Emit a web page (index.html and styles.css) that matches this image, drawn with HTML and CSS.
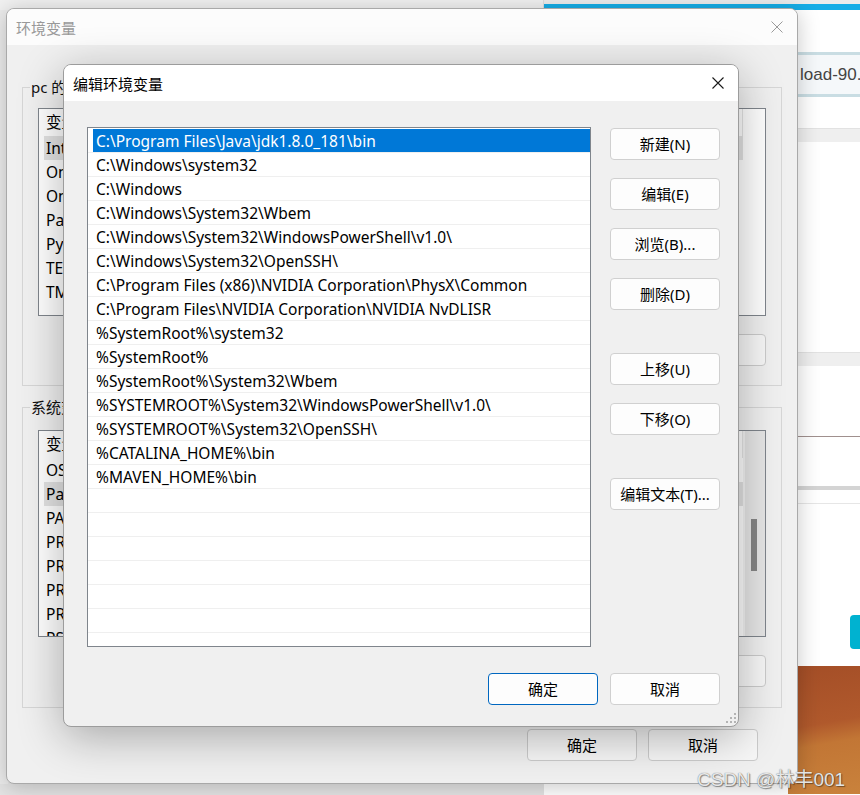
FILE: index.html
```html
<!DOCTYPE html>
<html lang="zh-CN">
<head>
    <meta charset="UTF-8">
    <title>编辑环境变量</title>
    <link rel="stylesheet" href="styles.css">
</head>
<body>
    <div class="desk-top"></div>
    <div class="desk-left"></div>

    <!-- 背后的网页 -->
    <div class="site">
        <div class="site-top"></div>
        <div class="site-bar"></div>
        <div class="site-input">load-90.</div>
        <div class="site-strip s1"></div>
        <div class="site-strip s2"></div>
        <div class="site-line l1"></div>
        <div class="site-strip s3"></div>
        <div class="site-line l2"></div>
        <div class="site-btn"></div>
        <div class="site-wall"></div>
    </div>

    <!-- 环境变量 窗口 -->
    <div class="win win-back">
        <div class="win-title">
            <span>环境变量</span>
            <svg class="close" width="12" height="12" viewBox="0 0 12 12"><path d="M0.5 0.5L11.5 11.5M11.5 0.5L0.5 11.5" stroke="#9a9a9a" stroke-width="1"/></svg>
        </div>
        <div class="back-body">
            <fieldset class="group g-user">
                <legend>pc 的用户变量(U)</legend>
                <div class="vlist vl-user">
                    <div class="vlist-main">
                        <div class="vhead">变量</div>
                        <div class="vrow hl">IntelliJ IDEA</div>
                        <div class="vrow">OneDrive</div>
                        <div class="vrow">OneDriveConsumer</div>
                        <div class="vrow">Path</div>
                        <div class="vrow">PyCharm Community Edition</div>
                        <div class="vrow">TEMP</div>
                        <div class="vrow">TMP</div>
                    </div>
                </div>
                <div class="group-btns">
                    <div class="btn btn-back">新建(N)...</div>
                    <div class="btn btn-back">编辑(E)...</div>
                    <div class="btn btn-back">删除(D)</div>
                </div>
            </fieldset>
            <fieldset class="group g-sys">
                <legend>系统变量(S)</legend>
                <div class="vlist vl-sys">
                    <div class="vlist-main">
                        <div class="vhead">变量</div>
                        <div class="vrow">OS</div>
                        <div class="vrow hl">Path</div>
                        <div class="vrow">PATHEXT</div>
                        <div class="vrow">PROCESSOR_ARCHITECTURE</div>
                        <div class="vrow">PROCESSOR_IDENTIFIER</div>
                        <div class="vrow">PROCESSOR_LEVEL</div>
                        <div class="vrow">PROCESSOR_REVISION</div>
                        <div class="vrow">PSModulePath</div>
                    </div>
                    <div class="vscroll"><div class="thumb"></div></div>
                </div>
                <div class="group-btns sys-btns">
                    <div class="btn btn-back">新建(W)...</div>
                    <div class="btn btn-back">编辑(I)...</div>
                    <div class="btn btn-back">删除(L)</div>
                </div>
            </fieldset>
            <div class="back-foot">
                <div class="btn btn-back">确定</div>
                <div class="btn btn-back">取消</div>
            </div>
        </div>
    </div>

    <!-- 编辑环境变量 对话框 -->
    <div class="win win-edit">
        <div class="win-title edit-title">
            <span>编辑环境变量</span>
            <svg class="close" width="12" height="12" viewBox="0 0 12 12"><path d="M0.5 0.5L11.5 11.5M11.5 0.5L0.5 11.5" stroke="#1a1a1a" stroke-width="1.1"/></svg>
        </div>
        <div class="edit-body">
            <div class="edit-main">
                <ul class="paths">
                    <li class="sel"><span>C:\Program Files\Java\jdk1.8.0_181\bin</span></li>
                    <li><span>C:\Windows\system32</span></li>
                    <li><span>C:\Windows</span></li>
                    <li><span>C:\Windows\System32\Wbem</span></li>
                    <li><span>C:\Windows\System32\WindowsPowerShell\v1.0\</span></li>
                    <li><span>C:\Windows\System32\OpenSSH\</span></li>
                    <li><span>C:\Program Files (x86)\NVIDIA Corporation\PhysX\Common</span></li>
                    <li><span>C:\Program Files\NVIDIA Corporation\NVIDIA NvDLISR</span></li>
                    <li><span>%SystemRoot%\system32</span></li>
                    <li><span>%SystemRoot%</span></li>
                    <li><span>%SystemRoot%\System32\Wbem</span></li>
                    <li><span>%SYSTEMROOT%\System32\WindowsPowerShell\v1.0\</span></li>
                    <li><span>%SYSTEMROOT%\System32\OpenSSH\</span></li>
                    <li><span>%CATALINA_HOME%\bin</span></li>
                    <li><span>%MAVEN_HOME%\bin</span></li>
                    <li><span></span></li>
                    <li><span></span></li>
                    <li><span></span></li>
                    <li><span></span></li>
                    <li><span></span></li>
                    <li><span></span></li>
                </ul>
                <div class="side">
                    <div class="btn">新建(N)</div>
                    <div class="btn">编辑(E)</div>
                    <div class="btn">浏览(B)...</div>
                    <div class="btn">删除(D)</div>
                    <div class="btn gap-lg">上移(U)</div>
                    <div class="btn">下移(O)</div>
                    <div class="btn gap-lg">编辑文本(T)...</div>
                </div>
            </div>
            <div class="edit-foot">
                <div class="btn btn-ok">确定</div>
                <div class="btn">取消</div>
            </div>
        </div>
        <svg class="grip" width="13" height="13" viewBox="0 0 13 13">
            <rect x="9" y="1" width="2" height="2" fill="#b4b4b4"/>
            <rect x="5" y="5" width="2" height="2" fill="#b4b4b4"/>
            <rect x="9" y="5" width="2" height="2" fill="#b4b4b4"/>
            <rect x="1" y="9" width="2" height="2" fill="#b4b4b4"/>
            <rect x="5" y="9" width="2" height="2" fill="#b4b4b4"/>
            <rect x="9" y="9" width="2" height="2" fill="#b4b4b4"/>
        </svg>
    </div>

    <div class="mark">CSDN @林丰001</div>
</body>
</html>
```

FILE: styles.css
```css
* {
    box-sizing: border-box;
}

body, html {
    margin: 0;
    padding: 0;
}
body {
    position: relative;
    width: 860px;
    height: 795px;
    overflow: hidden;
    background: #e4e4e4;
    font-family: "Noto Sans", "Noto Sans CJK SC", sans-serif;
    font-size: 15px;
    color: #000;
}

/* 桌面上其它窗口的边 */
.desk-top {
    position: absolute;
    left: 0;
    top: 0;
    width: 544px;
    height: 10px;
    background: #f1f1f1;
    border-right: 1px solid #ddd;
}
.desk-left {
    position: absolute;
    left: 0;
    top: 10px;
    width: 8px;
    height: 774px;
    background: #ececec;
}

/* 右边的网页 */
.site {
    position: absolute;
    left: 544px;
    top: 0;
    width: 316px;
    height: 795px;
    background: #fff;
}
.site-top {
    height: 4px;
    background: #ececec;
}
.site-bar {
    height: 6px;
    background: #16ade6;
}
.site-input {
    margin: 42px 0 0 230px;
    height: 45px;
    border: 3px solid #c9dde3;
    border-right: none;
    background: #f5f8fa;
    padding-left: 23px;
    line-height: 39px;
    font-size: 17px;
    color: #444;
    font-family: "Liberation Sans", sans-serif;
    white-space: nowrap;
}
.site-strip {
    height: 14px;
    background: #efefef;
    border-top: 1px solid #e2e2e2;
}
.s1 { margin-top: 31px; }
.s2 { margin-top: 210px; }
.s3 {
    margin-top: 49px;
    height: 4px;
    background: #d4d4d4;
    border: none;
}
.site-line {
    height: 1px;
}
.l1 {
    margin-top: 70px;
    background: #a0908e;
}
.l2 {
    margin-top: 13px;
    background: #e6e6e6;
}
.site-btn {
    margin: 111px 0 0 306px;
    height: 34px;
    border-radius: 4px 0 0 4px;
    background: #00b2d0;
}
.site-wall {
    margin: 17px 0 0 244px;
    height: 128px;
    background: linear-gradient(170deg, #a44e27 0%, #b0592c 45%, #c27635 60%, #c9823c 100%);
}

/* 窗口 */
.win {
    position: absolute;
    border: 1px solid #a9a9a9;
    border-radius: 8px;
    overflow: hidden;
    background: #f0f0f0;
}
.win-title {
    height: 36px;
    display: flex;
    align-items: center;
    justify-content: space-between;
    padding: 0 14px 0 9px;
    background: #fcfcfc;
}
.close {
    display: block;
}

.win-back {
    left: 6px;
    top: 8px;
    width: 792px;
    height: 776px;
    box-shadow: 0 3px 22px rgba(0, 0, 0, 0.22);
}
.win-back .win-title {
    color: #999;
}
.back-body {
    padding: 0 15px;
}
.group {
    margin: 0;
    padding: 0 15px 19px;
    border: 1px solid #d6d6d6;
    min-width: 0;
}
.group legend {
    margin-left: -8px;
    padding: 0 1px;
    line-height: 20px;
    color: #111;
}
.g-user {
    margin-top: 32px;
}
.g-sys {
    margin-top: 11px;
    padding-bottom: 20px;
}
.vlist {
    display: flex;
    background: #fff;
    border: 1px solid #7f858c;
    overflow: hidden;
    font-size: 15.5px;
}
.vl-user {
    margin-top: 11px;
    height: 208px;
}
.vl-sys {
    margin-top: 13px;
    height: 207px;
}
.vlist-main {
    flex-grow: 1;
    min-width: 0;
}
.vhead {
    height: 27px;
    line-height: 27px;
    padding-left: 7px;
    border-right: 1px solid #e5e5e5;
    margin-right: 22px;
}
.vrow {
    height: 24px;
    line-height: 24px;
    margin: 0 22px 0 5px;
    padding-left: 2px;
    white-space: nowrap;
    overflow: hidden;
}
.vrow.hl {
    background: #e3e3e3;
}
.vl-sys .vrow {
    margin-right: 0;
}
.vl-sys .vhead {
    margin-right: 0;
}
.vscroll {
    width: 22px;
    background: linear-gradient(90deg, #f4f4f4 0, #f4f4f4 2px, #e6e6e6 2px);
}
.thumb {
    width: 6px;
    height: 52px;
    margin: 88px 0 0 8px;
    background: #858585;
}
.group-btns {
    display: flex;
    justify-content: flex-end;
    gap: 11px;
    margin-top: 18px;
}
.back-foot {
    display: flex;
    justify-content: flex-end;
    gap: 11px;
    margin: 21px 24px 0 0;
}

/* 按钮 */
.btn {
    width: 110px;
    height: 32px;
    line-height: 30px;
    text-align: center;
    background: #fdfdfd;
    border: 1px solid #d0d0d0;
    border-radius: 4px;
    white-space: nowrap;
}
.btn-back {
    background: #f7f7f7;
    border-color: #cbcbcb;
}
.btn-ok {
    border-color: #0067c0;
}

/* 编辑环境变量 */
.win-edit {
    left: 63px;
    top: 64px;
    width: 676px;
    height: 663px;
    border-color: #9c9c9c;
    box-shadow: 0 10px 45px rgba(0, 0, 0, 0.3);
}
.edit-title {
    background: #fff;
}
.edit-body {
    padding: 26px 18px 0 23px;
}
.edit-main {
    display: flex;
    gap: 19px;
}
.paths {
    list-style: none;
    margin: 0;
    padding: 1px 0 0;
    width: 504px;
    height: 520px;
    background: #fff;
    border: 1px solid #7f858c;
    overflow: hidden;
    font-size: 15.5px;
}
.paths li {
    height: 24px;
    padding-left: 5px;
    border-bottom: 1px solid #efefef;
}
.paths li span {
    display: block;
    height: 23px;
    line-height: 24px;
    padding-left: 3px;
    white-space: nowrap;
}
.paths li.sel span {
    background: #0078d7;
    color: #fff;
}
.side {
    display: flex;
    flex-direction: column;
    gap: 18px;
    padding-top: 1px;
}
.side .gap-lg {
    margin-top: 25px;
}
.edit-foot {
    display: flex;
    justify-content: flex-end;
    gap: 12px;
    margin-top: 26px;
}
.grip {
    position: absolute;
    right: 0;
    bottom: 1px;
}

.mark {
    position: absolute;
    left: 697px;
    top: 764px;
    font-family: "Liberation Sans", "Noto Sans CJK SC", sans-serif;
    font-size: 19px;
    color: rgba(255, 255, 255, 0.85);
    text-shadow: 0 0 1px #555, 1px 1px 1px rgba(0, 0, 0, 0.4);
    white-space: nowrap;
}
```
